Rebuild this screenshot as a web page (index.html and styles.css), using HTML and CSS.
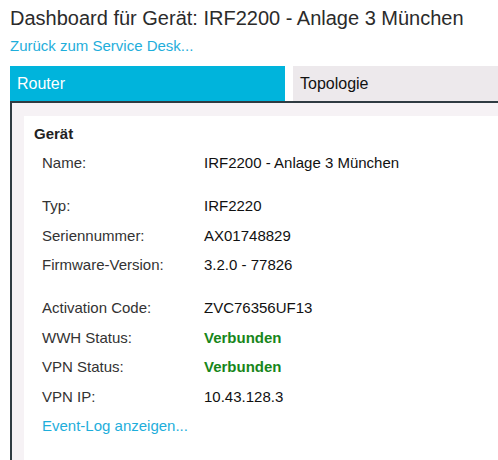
FILE: index.html
```html
<!DOCTYPE html>
<html lang="de">
<head>
  <meta charset="UTF-8" />
  <title>Dashboard</title>
  <link rel="stylesheet" href="styles.css">
</head>
<body>
  <div class="page">
    <h1>Dashboard für Gerät: IRF2200 - Anlage 3 München</h1>
    <a class="back-link" href="#">Zurück zum Service Desk...</a>

    <div class="tabs">
      <div class="tab active">Router</div>
      <div class="tab">Topologie</div>
    </div>

    <div class="tab-content">
      <div class="card">
        <h3>Gerät</h3>
        <div class="info-group first">
          <div class="row"><span class="label">Name:</span><span class="value">IRF2200 - Anlage 3 München</span></div>
        </div>
        <div class="info-group">
          <div class="row"><span class="label">Typ:</span><span class="value">IRF2220</span></div>
          <div class="row"><span class="label">Seriennummer:</span><span class="value">AX01748829</span></div>
          <div class="row"><span class="label">Firmware-Version:</span><span class="value">3.2.0 - 77826</span></div>
        </div>
        <div class="info-group">
          <div class="row"><span class="label">Activation Code:</span><span class="value">ZVC76356UF13</span></div>
          <div class="row"><span class="label">WWH Status:</span><span class="value ok">Verbunden</span></div>
          <div class="row"><span class="label">VPN Status:</span><span class="value ok">Verbunden</span></div>
          <div class="row"><span class="label">VPN IP:</span><span class="value">10.43.128.3</span></div>
        </div>
        <a class="log-link" href="#">Event-Log anzeigen...</a>
      </div>
    </div>
  </div>
</body>
</html>
```

FILE: styles.css
```css
* {
  margin: 0;
  padding: 0;
  box-sizing: border-box;
  font-family: 'Liberation Sans', Arial, sans-serif;
}

body {
  background-color: #fff;
  color: #333;
  overflow: hidden;
}

.page {
  padding: 6px 0 0 10px;
}

h1 {
  font-size: 20px;
  font-weight: normal;
  color: #2b2b2b;
  line-height: 24px;
}

.back-link {
  display: block;
  margin-top: 7px;
  font-size: 15px;
  line-height: 17px;
  color: #1eaedb;
  text-decoration: none;
}

.tabs {
  display: flex;
  gap: 8px;
  margin-top: 12px;
  height: 35px;
}

.tab {
  display: flex;
  align-items: center;
  padding-left: 7px;
  font-size: 16px;
  color: #111;
  background-color: #ede9ec;
  flex: 1;
}

.tab.active {
  flex: 0 0 275px;
  background-color: #00b4dc;
  color: #fff;
}

.tab-content {
  border-top: 2px solid #2f3b42;
  border-left: 2px solid #2f3b42;
  background-color: #f6f2f5;
  padding: 13px 0 0 12px;
  height: 359px;
}

.card {
  background-color: #fff;
  padding: 9px 0 0 10px;
  height: 100%;
}

.card h3 {
  font-size: 15px;
  font-weight: bold;
  color: #222;
  line-height: 17px;
}

.info-group {
  margin-top: 13.5px;
}

.info-group.first {
  margin-top: 6px;
}

.row {
  display: flex;
  font-size: 15px;
  line-height: 17px;
  padding: 6px 0 6.5px 8px;
}

.label {
  width: 162px;
  color: #333;
}

.value {
  color: #111;
}

.value.ok {
  color: #17861a;
  font-weight: bold;
}

.log-link {
  display: block;
  margin: 5.5px 0 0 8px;
  font-size: 15px;
  line-height: 17px;
  color: #1eaedb;
  text-decoration: none;
}
```
